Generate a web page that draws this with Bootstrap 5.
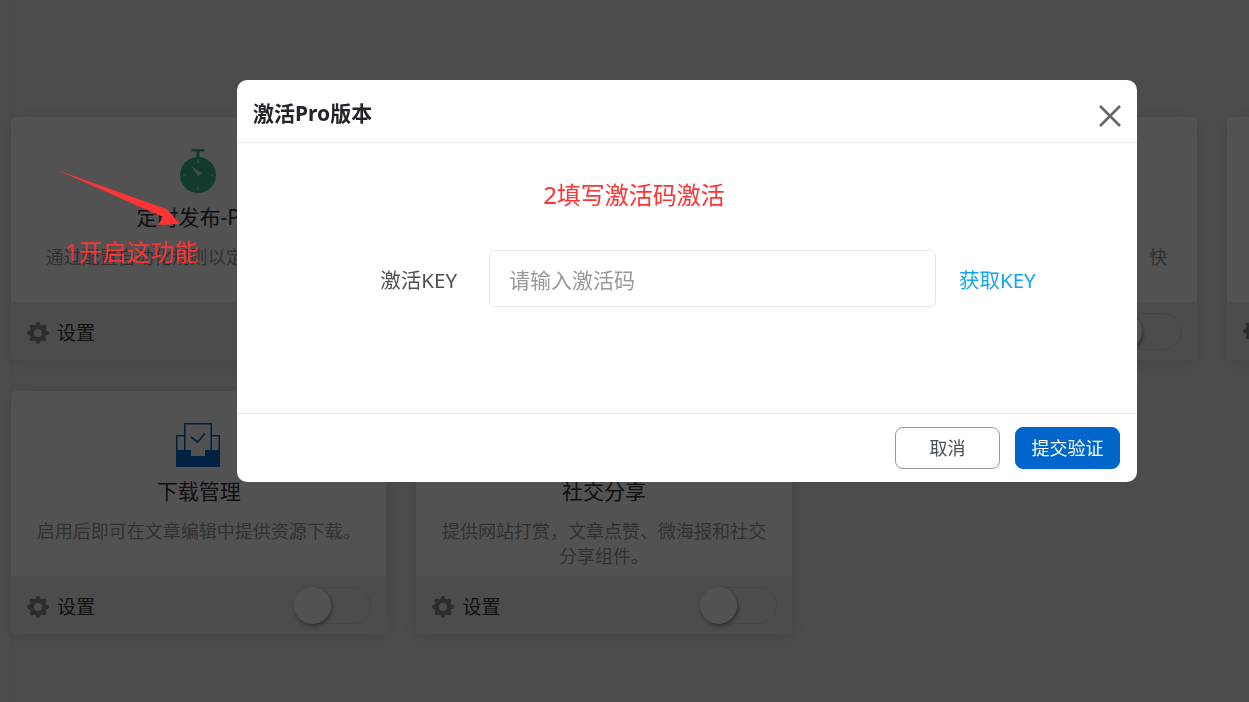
<!doctype html>
<html lang="zh-CN">
<head>
<meta charset="utf-8">
<title>激活Pro版本</title>
<link href="https://cdn.jsdelivr.net/npm/bootstrap@5.3.0/dist/css/bootstrap.min.css" rel="stylesheet">
<style>
html,body{height:100%;overflow:hidden}
body{background:#ececec;font-family:"Noto Sans","Noto Sans CJK SC",sans-serif;color:#212529}
.page-shell{height:702px;overflow:hidden}
.side-strip{width:11px;flex:none;background:#ececec;box-shadow:0 0 3px rgba(0,0,0,.08)}
.addon-grid{display:grid;grid-template-columns:repeat(4,375.4px);grid-auto-rows:243px;column-gap:30px;row-gap:31px;padding-top:117px;flex:none}
.addon-card{background:#fff;border-radius:4px;box-shadow:0 4px 18px rgba(0,0,0,.1);display:flex;flex-direction:column;overflow:hidden}
.addon-main{height:185px;padding:32px 25px 0;text-align:center;flex:none}
.addon-icon{height:44px;display:flex;justify-content:center;padding-right:2px}
.addon-title{font-size:21px;line-height:30px;margin:9px 0 13px;font-weight:400;color:#333}
.addon-desc{font-size:18px;line-height:25px;color:#999;margin:0}
.addon-lone{text-align:right;padding-right:5px}
.addon-foot{height:58px;background:#ededed;padding:0 15px 0 16px;display:flex;align-items:center;justify-content:space-between;flex:none}
.foot-link{font-size:19px;color:#333;display:flex;align-items:center;gap:8px;padding-top:4px}
.toggle-track{width:77px;height:37px;border-radius:19px;border:1px solid #d8d8d8;background:#ededed;display:block}
.toggle-knob{width:37px;height:37px;margin:-1px;border-radius:50%;background:#fff;box-shadow:1px 2px 4px rgba(0,0,0,.4);display:block}
.modal-backdrop{--bs-backdrop-opacity:.68}
.activate-dialog{--bs-modal-width:900px;margin:80px 0 0 237px;width:900px;max-width:900px}
.activate-dialog .modal-content{height:402px;border-radius:10px;border:0;overflow:hidden}
.activate-dialog .modal-header{height:63px;padding:0 16px;border-bottom:1px solid #e9e9e9;flex:none}
.activate-title{font-size:21px;font-weight:700;color:#212529;margin:0;padding-top:5px}
.close-x{background:none;border:0;padding:0;width:24px;height:24px;display:block;margin-right:-1px;margin-top:7px}
.activate-dialog .modal-body{padding:0;flex:1}
.red-heading{font-size:24px;line-height:36px;color:#f33;text-align:center;padding-right:106px;margin:34px 0 0}
.key-row{display:flex;align-items:center;margin-top:37px;height:57px}
.key-label{width:220px;text-align:right;font-size:20.5px;color:#495057;margin:0;flex:none;padding-top:3px}
.key-input{width:447px;height:57px;margin-left:32px;flex:none;font-size:21px;padding:3px 19px 0;border:1px solid #e8e8e8;border-radius:6px;box-shadow:none;color:#495057}
.key-input::placeholder{color:#999}
.key-link{font-size:20.5px;color:#12a5ee;margin-left:23px;text-decoration:none;padding-top:3px}
.activate-dialog .modal-footer{height:69px;padding:0 17px 0 0;border-top:1px solid #e9e9e9;flex:none;gap:15px}
.act-btn{width:105px;height:42px;font-size:18px;line-height:1;padding:0;border-radius:8px;margin:0}
.btn-cancel{background:#fff;border:1px solid #999;color:#495057}
.btn-submit{background:#06c;border:1px solid #06c;color:#fff}
.note-arrow{position:fixed;left:0;top:0;z-index:1070;pointer-events:none}
.note-text{position:fixed;left:65px;top:234px;z-index:1070;font-size:24px;line-height:36px;color:#f33;white-space:nowrap}
</style>
</head>
<body>
<svg width="0" height="0" class="d-block position-absolute">
  <defs>
    <symbol id="gear" viewBox="0 0 16 16"><path fill="#8c8c8c" d="M9.405 1.05c-.413-1.4-2.397-1.4-2.81 0l-.1.34a1.464 1.464 0 0 1-2.105.872l-.31-.17c-1.283-.698-2.686.705-1.987 1.987l.169.311c.446.82.023 1.841-.872 2.105l-.34.1c-1.4.413-1.4 2.397 0 2.81l.34.1a1.464 1.464 0 0 1 .872 2.105l-.17.31c-.698 1.283.705 2.686 1.987 1.987l.311-.169a1.464 1.464 0 0 1 2.105.872l.1.34c.413 1.4 2.397 1.4 2.81 0l.1-.34a1.464 1.464 0 0 1 2.105-.872l.31.17c1.283.698 2.686-.705 1.987-1.987l-.169-.311a1.464 1.464 0 0 1 .872-2.105l.34-.1c1.4-.413 1.4-2.397 0-2.81l-.34-.1a1.464 1.464 0 0 1-.872-2.105l.17-.31c.698-1.283-.705-2.686-1.987-1.987l-.311.169a1.464 1.464 0 0 1-2.105-.872l-.1-.34zM8 10.93a2.929 2.929 0 1 1 0-5.86 2.929 2.929 0 0 1 0 5.858z"/></symbol>
  </defs>
</svg>

<div class="page-shell d-flex">
  <div class="side-strip"></div>
  <div class="addon-grid">
    <div class="addon-card">
      <div class="addon-main">
        <div class="addon-icon">
          <svg width="36" height="44" viewBox="0 0 36 44">
            <rect x="11.500" y="0" width="13" height="2.500" fill="#3ab691"/>
            <rect x="16.500" y="2" width="3" height="6" fill="#3ab691"/>
            <circle cx="18" cy="26" r="18" fill="#3ab691"/>
            <path d="M18 11v3M18 38v3M3 26h3M30 26h3" stroke="#e2f3ee" stroke-width="1.500" opacity=".6"/>
            <path d="M11 17l10.500 7-2.800 3.500z" fill="#e2f3ee"/>
          </svg>
        </div>
        <h5 class="addon-title">定时发布-Pro</h5>
        <p class="addon-desc">通过配置自动化规则以定时发布文章。</p>
      </div>
      <div class="addon-foot">
        <span class="foot-link"><svg width="22" height="22"><use href="#gear"/></svg>设置</span>
        <span class="toggle-track"><span class="toggle-knob"></span></span>
      </div>
    </div>
    <div class="addon-card">
      <div class="addon-main"></div>
      <div class="addon-foot"></div>
    </div>
    <div class="addon-card">
      <div class="addon-main">
        <div class="addon-icon"></div>
        <div class="addon-title">&nbsp;</div>
        <p class="addon-desc addon-lone">快</p>
      </div>
      <div class="addon-foot">
        <span></span>
        <span class="toggle-track"><span class="toggle-knob"></span></span>
      </div>
    </div>
    <div class="addon-card">
      <div class="addon-main"></div>
      <div class="addon-foot"><svg width="22" height="22"><use href="#gear"/></svg></div>
    </div>
    <div class="addon-card">
      <div class="addon-main">
        <div class="addon-icon">
          <svg width="44" height="44" viewBox="0 0 44 44">
            <path d="M8 12.800H.8V28M36 12.800h7.200V28" fill="none" stroke="#06c" stroke-width="1.600"/>
            <path d="M8.800 28V.8h26.400V28" fill="none" stroke="#06c" stroke-width="1.600"/>
            <path d="M15 14l6.500 5L29 10.500" fill="none" stroke="#06c" stroke-width="1.800"/>
            <path d="M0 27h15v6h14v-6h15v17H0z" fill="#06c"/>
          </svg>
        </div>
        <h5 class="addon-title">下载管理</h5>
        <p class="addon-desc">启用后即可在文章编辑中提供资源下载。</p>
      </div>
      <div class="addon-foot">
        <span class="foot-link"><svg width="22" height="22"><use href="#gear"/></svg>设置</span>
        <span class="toggle-track"><span class="toggle-knob"></span></span>
      </div>
    </div>
    <div class="addon-card">
      <div class="addon-main">
        <div class="addon-icon"></div>
        <h5 class="addon-title">社交分享</h5>
        <p class="addon-desc">提供网站打赏，文章点赞、微海报和社交分享组件。</p>
      </div>
      <div class="addon-foot">
        <span class="foot-link"><svg width="22" height="22"><use href="#gear"/></svg>设置</span>
        <span class="toggle-track"><span class="toggle-knob"></span></span>
      </div>
    </div>
  </div>
</div>

<div class="modal-backdrop fade show"></div>
<div class="modal fade show d-block" tabindex="-1">
  <div class="modal-dialog activate-dialog">
    <div class="modal-content">
      <div class="modal-header d-flex justify-content-between align-items-center">
        <h5 class="activate-title">激活Pro版本</h5>
        <button type="button" class="close-x" aria-label="关闭">
          <svg width="24" height="24" viewBox="0 0 24 24"><path d="M2 2l20 20M22 2L2 22" stroke="#666" stroke-width="2.600" fill="none"/></svg>
        </button>
      </div>
      <div class="modal-body">
        <p class="red-heading">2填写激活码激活</p>
        <div class="key-row">
          <label class="key-label" for="key">激活KEY</label>
          <input id="key" class="form-control key-input" type="text" placeholder="请输入激活码">
          <a class="key-link" href="#">获取KEY</a>
        </div>
      </div>
      <div class="modal-footer">
        <button type="button" class="btn act-btn btn-cancel">取消</button>
        <button type="button" class="btn act-btn btn-submit">提交验证</button>
      </div>
    </div>
  </div>
</div>

<svg class="note-arrow" width="300" height="300" viewBox="0 0 300 300"><polygon points="57,170 166,209 163,205 180,224 158,225 163,217" fill="#f33"/></svg>
<div class="note-text">1开启这功能</div>

<script src="https://cdn.jsdelivr.net/npm/bootstrap@5.3.0/dist/js/bootstrap.bundle.min.js"></script>
</body>
</html>
